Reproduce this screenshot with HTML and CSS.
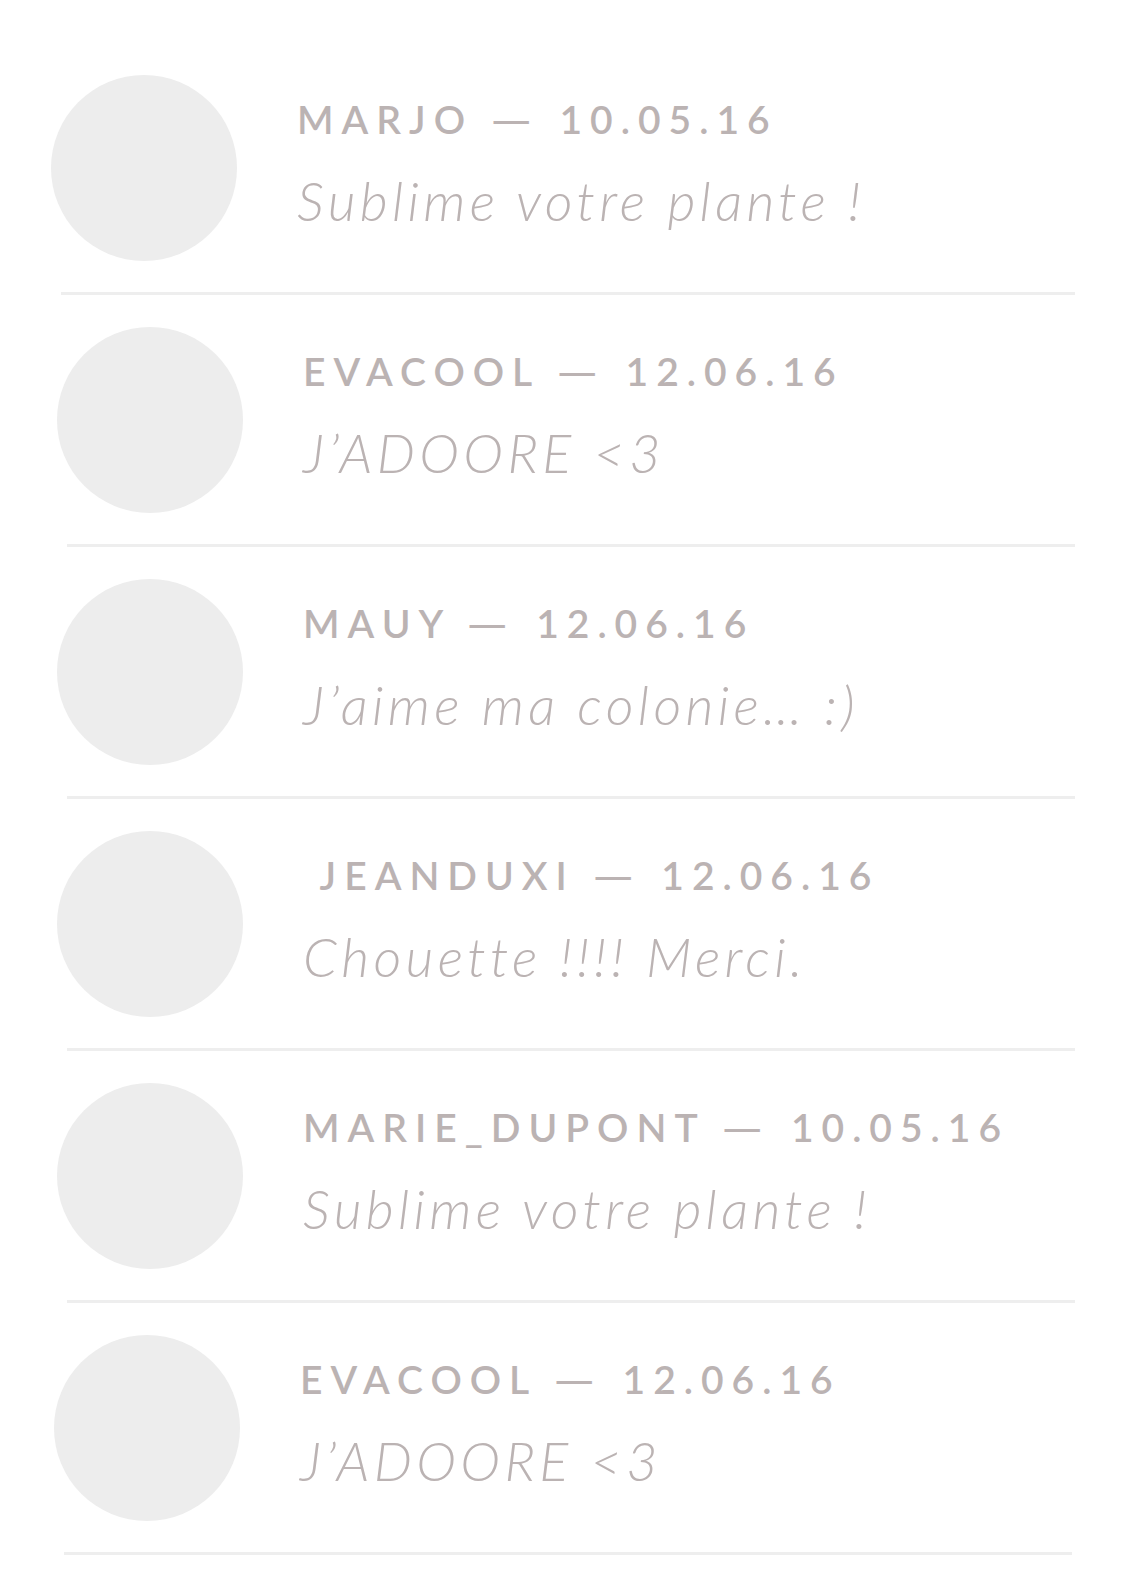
FILE: index.html
```html
<!DOCTYPE html>
<html lang="fr">
<head>
<meta charset="utf-8">
<title>Commentaires</title>
<link rel="stylesheet" href="styles.css">
</head>
<body>
<ul class="comments">
  <li class="comment comment--wide">
    <div class="comment-main">
      <div class="avatar"></div>
      <div class="comment-text">
        <p class="comment-meta">Marjo <span class="dash">—</span> 10.05.16</p>
        <p class="comment-body">Sublime votre plante !</p>
      </div>
    </div>
    <div class="divider"></div>
  </li>
  <li class="comment comment--inset">
    <div class="comment-main">
      <div class="avatar"></div>
      <div class="comment-text">
        <p class="comment-meta">Evacool <span class="dash">—</span> 12.06.16</p>
        <p class="comment-body">J’ADOORE &lt;3</p>
      </div>
    </div>
    <div class="divider"></div>
  </li>
  <li class="comment comment--inset">
    <div class="comment-main">
      <div class="avatar"></div>
      <div class="comment-text">
        <p class="comment-meta">Mauy <span class="dash">—</span> 12.06.16</p>
        <p class="comment-body">J’aime ma colonie… :)</p>
      </div>
    </div>
    <div class="divider"></div>
  </li>
  <li class="comment comment--inset">
    <div class="comment-main">
      <div class="avatar"></div>
      <div class="comment-text">
        <p class="comment-meta">&nbsp;Jeanduxi <span class="dash">—</span> 12.06.16</p>
        <p class="comment-body">Chouette !!!! Merci.</p>
      </div>
    </div>
    <div class="divider"></div>
  </li>
  <li class="comment comment--inset">
    <div class="comment-main">
      <div class="avatar"></div>
      <div class="comment-text">
        <p class="comment-meta">Marie_Dupont <span class="dash">—</span> 10.05.16</p>
        <p class="comment-body">Sublime votre plante !</p>
      </div>
    </div>
    <div class="divider"></div>
  </li>
  <li class="comment comment--mid">
    <div class="comment-main">
      <div class="avatar"></div>
      <div class="comment-text">
        <p class="comment-meta">Evacool <span class="dash">—</span> 12.06.16</p>
        <p class="comment-body">J’ADOORE &lt;3</p>
      </div>
    </div>
    <div class="divider"></div>
  </li>
</ul>
</body>
</html>
```

FILE: styles.css
```css
html, body {
  margin: 0;
  padding: 0;
  background: #ffffff;
}

body {
  width: 1125px;
  font-family: "Lato", "Liberation Sans", sans-serif;
  color: #bbb3b3;
}

.comments {
  list-style: none;
  margin: 0;
  padding: 43px 0 0 0;
}

.comment {
  padding-top: 32px;
  margin-left: 57px;
}

.comment--wide {
  margin-left: 51px;
}

.comment--mid {
  margin-left: 54px;
}

.comment-main {
  display: flex;
  align-items: flex-start;
  gap: 60px;
}

.avatar {
  flex: 0 0 186px;
  width: 186px;
  height: 186px;
  border-radius: 50%;
  background: #ededed;
}

.comment-text {
  display: flex;
  flex-direction: column;
  padding-top: 25px;
}

.comment-meta {
  margin: 0;
  font-size: 39px;
  line-height: 39px;
  font-weight: 600;
  letter-spacing: 0.205em;
  text-transform: uppercase;
  white-space: pre;
}

.dash {
  display: inline-block;
  transform: scaleX(1.35);
  margin: 0 6px;
}

.comment-body {
  margin: 35px 0 0 0;
  font-size: 54px;
  line-height: 54px;
  font-weight: 300;
  font-style: italic;
  letter-spacing: 0.08em;
  white-space: pre;
}

.divider {
  margin: 31px 0 0 10px;
  width: 1008px;
  height: 3px;
  background: #eeeeee;
}

.comment--wide .divider {
  width: 1014px;
}
```
